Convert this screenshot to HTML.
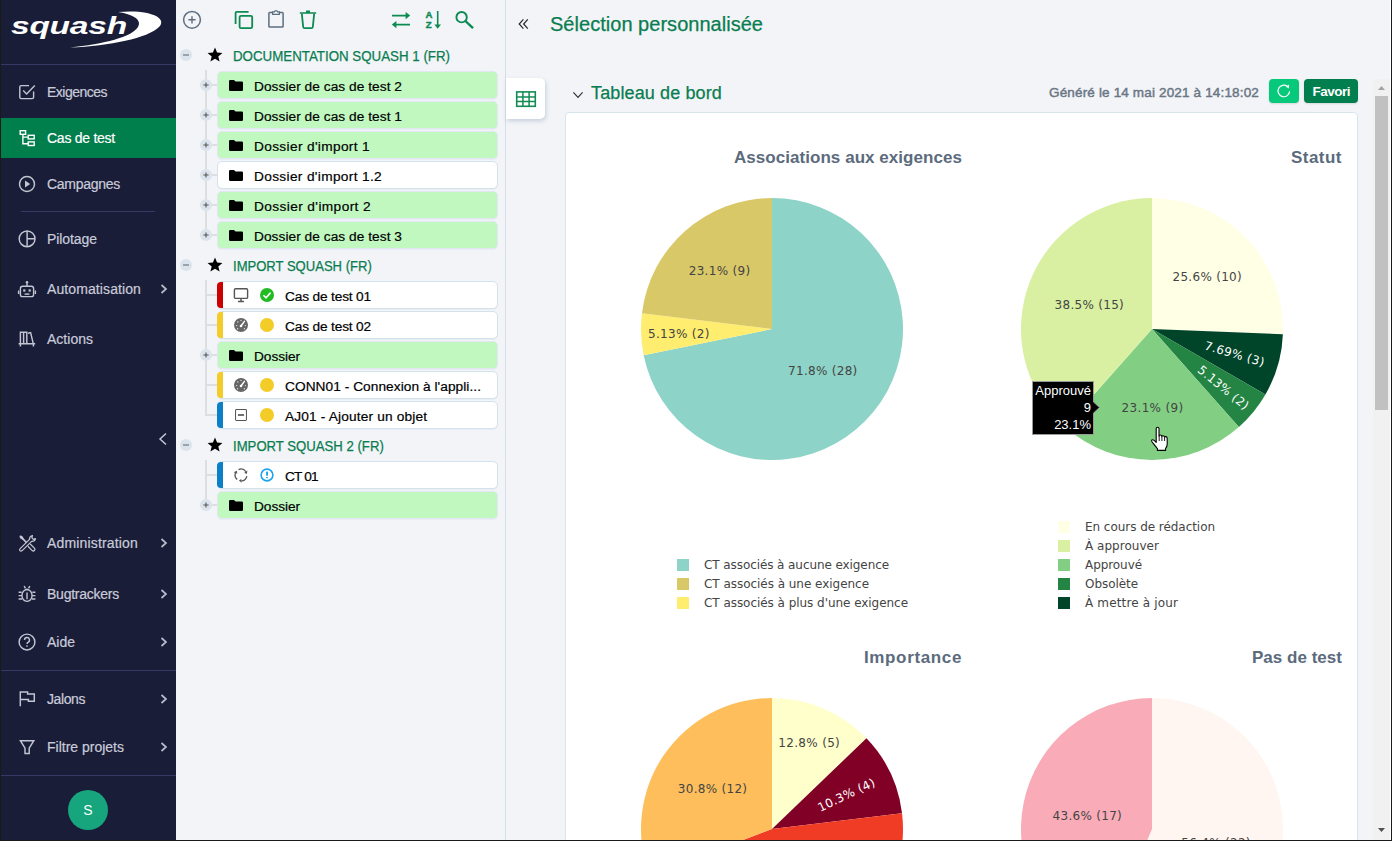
<!DOCTYPE html>
<html lang="fr"><head><meta charset="utf-8"><title>Squash TM - Cas de test</title>
<style>

*{box-sizing:border-box;margin:0;padding:0}
html,body{width:1392px;height:841px;overflow:hidden;background:#f2f4f8;font-family:"Liberation Sans",sans-serif;}
#app{position:relative;width:1392px;height:841px;overflow:hidden;background:#f2f4f8;}
.abs{position:absolute}
svg{position:absolute;overflow:visible}
/* outer frame */
#frameL{position:absolute;left:0;top:0;width:1px;height:841px;background:#1a1a18;z-index:50}
#frameB{position:absolute;left:0;top:840px;width:1392px;height:1px;background:#1a1a18;z-index:50}
#frameR{position:absolute;left:1391px;top:0;width:1px;height:841px;background:#1a1a18;z-index:50}
#frameR2{position:absolute;left:1390px;top:0;width:1px;height:840px;background:#ffffff;z-index:49}
/* sidebar */
#side{position:absolute;left:0;top:0;width:176px;height:841px;background:#1a1d38;color:#c9cbd9}
#side .sep{position:absolute;height:1px;background:#363963}
#side .it{position:absolute;left:47px;font-size:14px;line-height:20px;white-space:nowrap;color:#c9cbd9;-webkit-text-stroke:0.2px currentColor}
#side .act{position:absolute;left:1px;top:118px;width:175px;height:40px;background:#007e4b}
#side .chev{position:absolute;left:160px;width:8px;height:10px}
/* tree */
#tree{position:absolute;left:176px;top:0;width:329px;height:840px;background:#f2f4f8}
#treeDiv{position:absolute;left:505px;top:0;width:1px;height:840px;background:#d3dee8}
.row{position:absolute;left:217px;width:281px;height:28px;border-radius:5px;border:1px solid #e2e7f3;font-size:13.7px;line-height:26px;white-space:nowrap;color:#000;box-shadow:0 1px 0 rgba(215,220,236,.35)}
.row.g{background:#c0f8c0}
.row.w{background:#fff;border-color:#d4e2ec}
.row .tx{position:absolute;top:1.5px;-webkit-text-stroke:0.2px #000}
.row .stripe{position:absolute;left:-1px;top:0px;width:6px;height:26px;border-radius:4px 0 0 4px}
.proj{position:absolute;left:233px;font-size:14px;line-height:20px;color:#0a7d50;white-space:nowrap;-webkit-text-stroke:0.25px #0a7d50}
.tog{position:absolute;width:12px;height:12px;border-radius:6px;background:#dbe4ec}
.vl{position:absolute;width:1.5px;background:#dedede}
.hl{position:absolute;height:1.5px;background:#dedede}
/* main */
#main{position:absolute;left:506px;top:0;width:884px;height:840px;background:#f2f4f8}
.green{color:#0a7d50}
#card{position:absolute;left:565px;top:112px;width:793px;height:740px;background:#fff;border:1px solid #d9e5ed;border-radius:4px}
.ptitle{position:absolute;font-weight:bold;font-size:17px;line-height:20px;color:#5b6b7d;white-space:nowrap;text-align:right}
.plab{font-family:"DejaVu Sans","Liberation Sans",sans-serif;font-size:12px;fill:#444}
.leg{font-family:"DejaVu Sans","Liberation Sans",sans-serif;font-size:12px;fill:#444}

</style></head>
<body>
<div id="app">

<div id="side">
  <!-- logo -->
  <div class="abs" style="left:10.6px;top:8px;width:95px;height:36px;font-size:24.5px;line-height:36px;font-weight:bold;font-style:italic;color:#fff;transform-origin:0 0;transform:scaleX(1.37);letter-spacing:-0.2px">squash</div>
  <svg style="left:0;top:0.1px" width="176" height="64" viewBox="0 0 176 64"><path d="M118,12 C150,9 168,18 159,27 C148,38 110,46 70,47.5 C104,44 132,37 138,27 C142,20 134,14.5 118,12 Z" fill="#fff"/></svg>
  <div class="sep" style="left:1px;top:64px;width:175px"></div>
  <div class="act"></div>
  <!-- Exigences icon -->
  <svg style="left:17px;top:82px" width="20" height="20" viewBox="0 0 20 20"><path d="M12,3.6 H4.2 Q2.8,3.6 2.8,5 V15.2 Q2.8,16.6 4.2,16.6 H15.2 Q16.6,16.6 16.6,15.2 V9.5" fill="none" stroke="#c3c5d3" stroke-width="1.4"/><path d="M6.2,8.6 L9.6,12 L17.8,3.6" fill="none" stroke="#c3c5d3" stroke-width="1.4"/></svg>
  <!-- Cas de test icon -->
  <svg style="left:17px;top:128px" width="20" height="20" viewBox="0 0 20 20"><g fill="none" stroke="#fff" stroke-width="1.4"><rect x="3.2" y="2.7" width="5.4" height="3.6"/><rect x="11.2" y="7.3" width="6" height="3.6"/><rect x="11.2" y="13.9" width="6" height="3.6"/><path d="M5.9,6.3 V15.7 H11.2 M5.9,9.1 H11.2"/></g></svg>
  <!-- Campagnes icon -->
  <svg style="left:17px;top:174px" width="20" height="20" viewBox="0 0 20 20"><circle cx="10" cy="10" r="7.5" fill="none" stroke="#c3c5d3" stroke-width="1.45"/><path d="M8,6.6 L13.2,10 L8,13.4 Z" fill="#c3c5d3"/></svg>
  <div class="sep" style="left:21px;top:211px;width:134px"></div>
  <!-- Pilotage icon -->
  <svg style="left:17px;top:229px" width="20" height="20" viewBox="0 0 20 20"><circle cx="10.1" cy="9.8" r="7.9" fill="none" stroke="#c3c5d3" stroke-width="1.45"/><path d="M10.1,1.9 V17.7 M10.1,9.8 H18" fill="none" stroke="#c3c5d3" stroke-width="1.45"/></svg>
  <!-- Automatisation icon -->
  <svg style="left:17px;top:279px" width="20" height="20" viewBox="0 0 20 20"><g fill="none" stroke="#c3c5d3" stroke-width="1.4"><rect x="3.4" y="7.2" width="13.2" height="10.4" rx="2.2"/><path d="M10,7 V4.4"/><path d="M1.6,11.5 V15 M18.4,11.5 V15"/></g><circle cx="10" cy="3.4" r="1.3" fill="#c3c5d3"/><rect x="6.2" y="10.4" width="2.2" height="2.2" fill="#c3c5d3"/><rect x="11.6" y="10.4" width="2.2" height="2.2" fill="#c3c5d3"/><rect x="7.6" y="14.4" width="4.8" height="1.4" fill="#c3c5d3"/></svg>
  <!-- Actions icon -->
  <svg style="left:17px;top:329px" width="20" height="20" viewBox="0 0 20 20"><g fill="none" stroke="#c3c5d3" stroke-width="1.45"><path d="M3.4,14.6 V3.2 H6.6 V14.6 M6.6,3.2 H9.8 V14.6 M11,4.2 L13.6,3.6 L16.2,14.4"/><path d="M1.6,14.7 H18.2 M3.4,14.7 V17.6 M16.4,14.7 V17.6"/></g></svg>
  <!-- collapse -->
  <svg style="left:158px;top:432px" width="10" height="14" viewBox="0 0 10 14"><path d="M8,1.5 L2,7 L8,12.5" fill="none" stroke="#c9cbd9" stroke-width="1.45"/></svg>
  <!-- Administration icon -->
  <svg style="left:17px;top:533px" width="20" height="20" viewBox="0 0 20 20"><g fill="none" stroke="#c3c5d3" stroke-width="1.25" stroke-linejoin="round"><path d="M3.2,15.6 L12.5,6.4 Q12.2,3.6 15.4,2.5 L14.9,4.9 L16.4,6.4 L18.5,5.6 Q17.8,8.6 14.6,8.4 L5.2,17.6 Q3.9,18.6 2.9,17.6 Q2.2,16.6 3.2,15.6 Z"/><path d="M13.2,11 L17.6,15.4 Q18.4,16.6 17.4,17.6 Q16.4,18.4 15.2,17.6 L10.9,13.3"/></g><path d="M5.4,5.4 L9.6,9.6" stroke="#c3c5d3" stroke-width="1.6" fill="none"/><path d="M2.6,3.6 Q2.2,2.4 3.4,2.4 L5.2,3 L6.8,5.6 L5.6,6.8 L3,5.2 Z" fill="#c3c5d3"/></svg>
  <!-- Bugtrackers icon -->
  <svg style="left:17px;top:584px" width="20" height="20" viewBox="0 0 20 20"><g fill="none" stroke="#c3c5d3" stroke-width="1.4"><path d="M5,11 A5,5.4 0 0 1 15,11 V12 A5,5.4 0 0 1 5,12 Z"/><path d="M10,8.6 V15.2"/><path d="M1.6,8.2 H4.6 M1.6,11.6 H4.8 M1.6,15 H5 M15.4,8.2 H18.4 M15.2,11.6 H18.4 M15,15 H18.4"/><path d="M7.2,2 L8.4,4.4 M12.8,2 L11.6,4.4"/></g><path d="M7.4,6.3 A2.8,2.8 0 0 1 12.6,6.3 Z" fill="#c3c5d3"/></svg>
  <!-- Aide icon -->
  <svg style="left:17px;top:632px" width="20" height="20" viewBox="0 0 20 20"><circle cx="10" cy="10" r="7.9" fill="none" stroke="#c3c5d3" stroke-width="1.45"/><path d="M7.5,8 A2.5,2.5 0 1 1 10.9,10.3 Q10,10.8 10,12" fill="none" stroke="#c3c5d3" stroke-width="1.4"/><rect x="9.3" y="13.3" width="1.4" height="1.5" fill="#c3c5d3"/></svg>
  <div class="sep" style="left:1px;top:670px;width:175px"></div>
  <!-- Jalons icon -->
  <svg style="left:17px;top:689px" width="20" height="20" viewBox="0 0 20 20"><path d="M3.3,17.2 V3 H10.6 V4.9 H17.3 V12.3 H11.4 V10.4 H3.3" fill="none" stroke="#c3c5d3" stroke-width="1.45"/></svg>
  <!-- Filtre icon -->
  <svg style="left:17px;top:737px" width="20" height="20" viewBox="0 0 20 20"><path d="M3.4,3.7 H16.8 L12.2,11.2 V16.4 H8 V11.2 Z" fill="none" stroke="#c3c5d3" stroke-width="1.45" stroke-linejoin="miter"/></svg>
  <div class="sep" style="left:1px;top:775px;width:175px"></div>
  <div class="abs" style="left:68px;top:790px;width:40px;height:40px;border-radius:20px;background:#16a57c;color:#fff;font-size:14px;line-height:40px;text-align:center">S</div>
<div class="it" style="top:81.8px;color:#c9cbd9;letter-spacing:-0.510px">Exigences</div><div class="it" style="top:127.8px;color:#fff;letter-spacing:-0.256px">Cas de test</div><div class="it" style="top:173.8px;color:#c9cbd9;letter-spacing:-0.277px">Campagnes</div><div class="it" style="top:228.8px;color:#c9cbd9;letter-spacing:-0.074px">Pilotage</div><div class="it" style="top:278.8px;color:#c9cbd9;letter-spacing:0.100px">Automatisation</div><div class="it" style="top:328.8px;color:#c9cbd9;letter-spacing:0.013px">Actions</div><div class="it" style="top:532.8px;color:#c9cbd9;letter-spacing:0.164px">Administration</div><div class="it" style="top:583.8px;color:#c9cbd9;letter-spacing:-0.245px">Bugtrackers</div><div class="it" style="top:631.8px;color:#c9cbd9;letter-spacing:-0.005px">Aide</div><div class="it" style="top:688.8px;color:#c9cbd9;letter-spacing:-0.411px">Jalons</div><div class="it" style="top:736.8px;color:#c9cbd9;letter-spacing:-0.001px">Filtre projets</div><svg style="left:160px;top:284px" width="8" height="10" viewBox="0 0 8 10"><path d="M1.5,1 L6,5 L1.5,9" fill="none" stroke="#b9bbcb" stroke-width="1.7"/></svg><svg style="left:160px;top:538px" width="8" height="10" viewBox="0 0 8 10"><path d="M1.5,1 L6,5 L1.5,9" fill="none" stroke="#b9bbcb" stroke-width="1.7"/></svg><svg style="left:160px;top:589px" width="8" height="10" viewBox="0 0 8 10"><path d="M1.5,1 L6,5 L1.5,9" fill="none" stroke="#b9bbcb" stroke-width="1.7"/></svg><svg style="left:160px;top:637px" width="8" height="10" viewBox="0 0 8 10"><path d="M1.5,1 L6,5 L1.5,9" fill="none" stroke="#b9bbcb" stroke-width="1.7"/></svg><svg style="left:160px;top:694px" width="8" height="10" viewBox="0 0 8 10"><path d="M1.5,1 L6,5 L1.5,9" fill="none" stroke="#b9bbcb" stroke-width="1.7"/></svg><svg style="left:160px;top:742px" width="8" height="10" viewBox="0 0 8 10"><path d="M1.5,1 L6,5 L1.5,9" fill="none" stroke="#b9bbcb" stroke-width="1.7"/></svg>
</div>

<div id="tree"></div><div id="treeDiv"></div>

<svg style="left:182px;top:10px" width="20" height="20" viewBox="0 0 20 20"><circle cx="10" cy="9.8" r="8.4" fill="none" stroke="#5d6e7f" stroke-width="1.5"/><path d="M6.4,9.8 H13.6 M10,6.2 V13.4" stroke="#5d6e7f" stroke-width="1.4" fill="none"/></svg>
<svg style="left:233px;top:9px" width="22" height="22" viewBox="0 0 22 22"><path d="M2.6,15 V4 Q2.6,2.8 3.8,2.8 H15.6" fill="none" stroke="#0b8a52" stroke-width="1.8"/><rect x="6.6" y="6.8" width="12.6" height="12.4" rx="1.4" fill="none" stroke="#0b8a52" stroke-width="1.8"/></svg>
<svg style="left:266px;top:8px" width="20" height="22" viewBox="0 0 20 22"><path d="M7,4.4 H3.8 Q2.9,4.4 2.9,5.3 V18.2 Q2.9,19.1 3.8,19.1 H16.2 Q17.1,19.1 17.1,18.2 V5.3 Q17.1,4.4 16.2,4.4 H13" fill="none" stroke="#5d6e7f" stroke-width="1.5"/><path d="M6.6,6.4 V3.8 H8.4 A1.7,1.7 0 0 1 11.6,3.8 H13.4 V6.4 Z" fill="none" stroke="#5d6e7f" stroke-width="1.3"/></svg>
<svg style="left:298px;top:9px" width="20" height="22" viewBox="0 0 20 22"><path d="M1.8,4 H18.2 M8,2.4 H12" fill="none" stroke="#0b8a52" stroke-width="1.7"/><path d="M3.8,4.6 L5.2,18 Q5.3,19.2 6.5,19.2 H13.5 Q14.7,19.2 14.8,18 L16.2,4.6" fill="none" stroke="#0b8a52" stroke-width="1.8"/></svg>
<svg style="left:390px;top:9px" width="22" height="22" viewBox="0 0 22 22"><path d="M2,6.6 H17 M20,15.6 H5" fill="none" stroke="#0b8a52" stroke-width="1.6"/><path d="M15.6,3 L20.2,6.6 L15.6,10.2 Z M6.4,12 L1.8,15.6 L6.4,19.2 Z" fill="#0b8a52"/></svg>
<svg style="left:424px;top:9px" width="20" height="22" viewBox="0 0 20 22"><path d="M13.7,2 V17" fill="none" stroke="#0b8a52" stroke-width="1.6"/><path d="M10.4,15.6 L13.7,19.8 L17,15.6 Z" fill="#0b8a52"/><text x="1.4" y="9" font-family="Liberation Sans, sans-serif" font-weight="bold" font-size="9.6" fill="#0b8a52" stroke="#0b8a52" stroke-width=".4">A</text><text x="1.7" y="19.2" font-family="Liberation Sans, sans-serif" font-weight="bold" font-size="9.6" fill="#0b8a52" stroke="#0b8a52" stroke-width=".4">Z</text></svg>
<svg style="left:454px;top:9px" width="22" height="22" viewBox="0 0 22 22"><circle cx="7.6" cy="8.2" r="5.2" fill="none" stroke="#0b8a52" stroke-width="1.9"/><path d="M11.4,12 L19,19.2" stroke="#0b8a52" stroke-width="2.4" fill="none"/></svg>
<div class="vl" style="left:205.2px;top:70px;height:160px"></div><div class="vl" style="left:205.2px;top:280px;height:136px"></div><div class="vl" style="left:205.2px;top:460px;height:40px"></div><div class="tog" style="left:180px;top:49px"></div><div class="abs" style="left:183px;top:54px;width:6px;height:2px;background:#9aa3ab"></div><svg style="left:207px;top:47px" width="16" height="16" viewBox="0 0 16 16"><path d="M8,0.6 L10.05,5.55 L15.4,5.95 L11.3,9.4 L12.6,14.6 L8,11.8 L3.4,14.6 L4.7,9.4 L0.6,5.95 L5.95,5.55 Z" fill="#000"/></svg><div class="proj" style="top:46px;transform-origin:0 50%;transform:scaleX(0.9511)">DOCUMENTATION SQUASH 1 (FR)</div><div class="hl" style="left:212px;top:84.2px;width:5px"></div><svg style="left:200px;top:79px" width="12" height="12" viewBox="0 0 12 12"><circle cx="6" cy="6" r="6" fill="#dbe4ec"/><path d="M3.4,6 H8.6 M6,3.4 V8.6" stroke="#555" stroke-width="1.1" fill="none"/></svg><div class="row g" style="top:71px"><svg style="left:11px;top:7.6px" width="14" height="11" viewBox="0 0 14 11"><path d="M1.2,0 H5 L6.6,1.6 H12.8 Q14,1.6 14,2.8 V9.8 Q14,11 12.8,11 H1.2 Q0,11 0,9.8 V1.2 Q0,0 1.2,0 Z" fill="#000"/></svg><div class="tx" style="left:36px;letter-spacing:0.049px">Dossier de cas de test 2</div></div><div class="hl" style="left:212px;top:114.2px;width:5px"></div><svg style="left:200px;top:109px" width="12" height="12" viewBox="0 0 12 12"><circle cx="6" cy="6" r="6" fill="#dbe4ec"/><path d="M3.4,6 H8.6 M6,3.4 V8.6" stroke="#555" stroke-width="1.1" fill="none"/></svg><div class="row g" style="top:101px"><svg style="left:11px;top:7.6px" width="14" height="11" viewBox="0 0 14 11"><path d="M1.2,0 H5 L6.6,1.6 H12.8 Q14,1.6 14,2.8 V9.8 Q14,11 12.8,11 H1.2 Q0,11 0,9.8 V1.2 Q0,0 1.2,0 Z" fill="#000"/></svg><div class="tx" style="left:36px;letter-spacing:0.049px">Dossier de cas de test 1</div></div><div class="hl" style="left:212px;top:144.2px;width:5px"></div><svg style="left:200px;top:139px" width="12" height="12" viewBox="0 0 12 12"><circle cx="6" cy="6" r="6" fill="#dbe4ec"/><path d="M3.4,6 H8.6 M6,3.4 V8.6" stroke="#555" stroke-width="1.1" fill="none"/></svg><div class="row g" style="top:131px"><svg style="left:11px;top:7.6px" width="14" height="11" viewBox="0 0 14 11"><path d="M1.2,0 H5 L6.6,1.6 H12.8 Q14,1.6 14,2.8 V9.8 Q14,11 12.8,11 H1.2 Q0,11 0,9.8 V1.2 Q0,0 1.2,0 Z" fill="#000"/></svg><div class="tx" style="left:36px;letter-spacing:0.341px">Dossier d'import 1</div></div><div class="hl" style="left:212px;top:174.2px;width:5px"></div><svg style="left:200px;top:169px" width="12" height="12" viewBox="0 0 12 12"><circle cx="6" cy="6" r="6" fill="#dbe4ec"/><path d="M3.4,6 H8.6 M6,3.4 V8.6" stroke="#555" stroke-width="1.1" fill="none"/></svg><div class="row w" style="top:161px"><svg style="left:11px;top:7.6px" width="14" height="11" viewBox="0 0 14 11"><path d="M1.2,0 H5 L6.6,1.6 H12.8 Q14,1.6 14,2.8 V9.8 Q14,11 12.8,11 H1.2 Q0,11 0,9.8 V1.2 Q0,0 1.2,0 Z" fill="#000"/></svg><div class="tx" style="left:36px;letter-spacing:0.336px">Dossier d'import 1.2</div></div><div class="hl" style="left:212px;top:204.2px;width:5px"></div><svg style="left:200px;top:199px" width="12" height="12" viewBox="0 0 12 12"><circle cx="6" cy="6" r="6" fill="#dbe4ec"/><path d="M3.4,6 H8.6 M6,3.4 V8.6" stroke="#555" stroke-width="1.1" fill="none"/></svg><div class="row g" style="top:191px"><svg style="left:11px;top:7.6px" width="14" height="11" viewBox="0 0 14 11"><path d="M1.2,0 H5 L6.6,1.6 H12.8 Q14,1.6 14,2.8 V9.8 Q14,11 12.8,11 H1.2 Q0,11 0,9.8 V1.2 Q0,0 1.2,0 Z" fill="#000"/></svg><div class="tx" style="left:36px;letter-spacing:0.396px">Dossier d'import 2</div></div><div class="hl" style="left:212px;top:234.2px;width:5px"></div><svg style="left:200px;top:229px" width="12" height="12" viewBox="0 0 12 12"><circle cx="6" cy="6" r="6" fill="#dbe4ec"/><path d="M3.4,6 H8.6 M6,3.4 V8.6" stroke="#555" stroke-width="1.1" fill="none"/></svg><div class="row g" style="top:221px"><svg style="left:11px;top:7.6px" width="14" height="11" viewBox="0 0 14 11"><path d="M1.2,0 H5 L6.6,1.6 H12.8 Q14,1.6 14,2.8 V9.8 Q14,11 12.8,11 H1.2 Q0,11 0,9.8 V1.2 Q0,0 1.2,0 Z" fill="#000"/></svg><div class="tx" style="left:36px;letter-spacing:0.049px">Dossier de cas de test 3</div></div><div class="tog" style="left:180px;top:259px"></div><div class="abs" style="left:183px;top:264px;width:6px;height:2px;background:#9aa3ab"></div><svg style="left:207px;top:257px" width="16" height="16" viewBox="0 0 16 16"><path d="M8,0.6 L10.05,5.55 L15.4,5.95 L11.3,9.4 L12.6,14.6 L8,11.8 L3.4,14.6 L4.7,9.4 L0.6,5.95 L5.95,5.55 Z" fill="#000"/></svg><div class="proj" style="top:256px;transform-origin:0 50%;transform:scaleX(0.9324)">IMPORT SQUASH (FR)</div><div class="hl" style="left:206px;top:294.2px;width:11px"></div><div class="row w" style="top:281px"><div class="stripe" style="background:#cc0000"></div><svg style="left:15px;top:5px" width="16" height="16" viewBox="0 0 16 16"><rect x="1.4" y="1.8" width="13.2" height="9.6" rx="1.2" fill="none" stroke="#555" stroke-width="1.4"/><path d="M8,11.6 V14 M5,14.4 H11" stroke="#555" stroke-width="1.5" fill="none"/></svg><svg style="left:42px;top:6px" width="14" height="14" viewBox="0 0 14 14"><circle cx="7" cy="7" r="7" fill="#22bb22"/><path d="M3.4,7.2 L6,9.8 L10.6,4.6" fill="none" stroke="#fff" stroke-width="1.6"/></svg><div class="tx" style="left:67px;letter-spacing:-0.161px">Cas de test 01</div></div><div class="hl" style="left:206px;top:324.2px;width:11px"></div><div class="row w" style="top:311px"><div class="stripe" style="background:#f4cc27"></div><svg style="left:16px;top:6.2px" width="14" height="14" viewBox="0 0 14 14"><circle cx="7" cy="7" r="7" fill="#666"/><path d="M7,8 L10.4,3.4" stroke="#fff" stroke-width="1.5" stroke-linecap="round"/><circle cx="7" cy="8" r="1.3" fill="#fff"/><g fill="#ddd"><circle cx="2.6" cy="7.6" r=".7"/><circle cx="3.8" cy="4" r=".7"/><circle cx="7" cy="2.4" r=".7"/><circle cx="11.4" cy="7.6" r=".7"/><circle cx="3.6" cy="10.8" r=".7"/><circle cx="10.4" cy="10.8" r=".7"/></g></svg><svg style="left:42px;top:6px" width="14" height="14" viewBox="0 0 14 14"><circle cx="7" cy="7" r="7" fill="#f4cc27"/></svg><div class="tx" style="left:67px;letter-spacing:-0.161px">Cas de test 02</div></div><div class="hl" style="left:212px;top:354.2px;width:5px"></div><svg style="left:200px;top:349px" width="12" height="12" viewBox="0 0 12 12"><circle cx="6" cy="6" r="6" fill="#dbe4ec"/><path d="M3.4,6 H8.6 M6,3.4 V8.6" stroke="#555" stroke-width="1.1" fill="none"/></svg><div class="row g" style="top:341px"><svg style="left:11px;top:7.6px" width="14" height="11" viewBox="0 0 14 11"><path d="M1.2,0 H5 L6.6,1.6 H12.8 Q14,1.6 14,2.8 V9.8 Q14,11 12.8,11 H1.2 Q0,11 0,9.8 V1.2 Q0,0 1.2,0 Z" fill="#000"/></svg><div class="tx" style="left:36px;letter-spacing:-0.057px">Dossier</div></div><div class="hl" style="left:206px;top:384.2px;width:11px"></div><div class="row w" style="top:371px"><div class="stripe" style="background:#f4cc27"></div><svg style="left:16px;top:6.2px" width="14" height="14" viewBox="0 0 14 14"><circle cx="7" cy="7" r="7" fill="#666"/><path d="M7,8 L10.4,3.4" stroke="#fff" stroke-width="1.5" stroke-linecap="round"/><circle cx="7" cy="8" r="1.3" fill="#fff"/><g fill="#ddd"><circle cx="2.6" cy="7.6" r=".7"/><circle cx="3.8" cy="4" r=".7"/><circle cx="7" cy="2.4" r=".7"/><circle cx="11.4" cy="7.6" r=".7"/><circle cx="3.6" cy="10.8" r=".7"/><circle cx="10.4" cy="10.8" r=".7"/></g></svg><svg style="left:42px;top:6px" width="14" height="14" viewBox="0 0 14 14"><circle cx="7" cy="7" r="7" fill="#f4cc27"/></svg><div class="tx" style="left:67px;letter-spacing:0.054px">CONN01 - Connexion à l'appli...</div></div><div class="hl" style="left:206px;top:414.2px;width:11px"></div><div class="row w" style="top:401px"><div class="stripe" style="background:#0b7fc7"></div><svg style="left:17px;top:7px" width="12" height="12" viewBox="0 0 13 13"><rect x=".6" y=".6" width="11.8" height="11.8" rx="1" fill="none" stroke="#555" stroke-width="1.1"/><rect x="3.2" y="5.6" width="6.6" height="1.8" fill="#555"/></svg><svg style="left:42px;top:6px" width="14" height="14" viewBox="0 0 14 14"><circle cx="7" cy="7" r="7" fill="#f4cc27"/></svg><div class="tx" style="left:67px;letter-spacing:0.163px">AJ01 - Ajouter un objet</div></div><div class="tog" style="left:180px;top:439px"></div><div class="abs" style="left:183px;top:444px;width:6px;height:2px;background:#9aa3ab"></div><svg style="left:207px;top:437px" width="16" height="16" viewBox="0 0 16 16"><path d="M8,0.6 L10.05,5.55 L15.4,5.95 L11.3,9.4 L12.6,14.6 L8,11.8 L3.4,14.6 L4.7,9.4 L0.6,5.95 L5.95,5.55 Z" fill="#000"/></svg><div class="proj" style="top:436px;transform-origin:0 50%;transform:scaleX(0.9393)">IMPORT SQUASH 2 (FR)</div><div class="hl" style="left:206px;top:474.2px;width:11px"></div><div class="row w" style="top:461px"><div class="stripe" style="background:#0b7fc7"></div><svg style="left:16px;top:6px" width="14" height="14" viewBox="0 0 14 14"><g fill="none" stroke="#555" stroke-width="1.3"><path d="M4.51,1.65 A5.9,5.9 0 0 1 11.83,3.62 M12.81,8.02 A5.9,5.9 0 0 1 7.51,12.88 M3.21,11.52 A5.9,5.9 0 0 1 1.46,4.98"/></g><path d="M10.28,4.71 L13.39,2.53 L12.83,6.08 Z M7.35,10.98 L7.68,14.77 L4.89,12.51 Z M3.24,5.63 L-0.33,4.33 L2.90,2.76 Z" fill="#555"/></svg><svg style="left:42px;top:6px" width="14" height="14" viewBox="0 0 14 14"><circle cx="7" cy="7" r="5.9" fill="#fff" stroke="#1ca3ee" stroke-width="1.6"/><rect x="6.1" y="3.6" width="1.9" height="4.2" rx=".4" fill="#1ca3ee"/><rect x="6.1" y="8.9" width="1.9" height="1.3" rx=".4" fill="#1ca3ee"/></svg><div class="tx" style="left:67px;letter-spacing:-0.855px">CT 01</div></div><div class="hl" style="left:212px;top:504.2px;width:5px"></div><svg style="left:200px;top:499px" width="12" height="12" viewBox="0 0 12 12"><circle cx="6" cy="6" r="6" fill="#dbe4ec"/><path d="M3.4,6 H8.6 M6,3.4 V8.6" stroke="#555" stroke-width="1.1" fill="none"/></svg><div class="row g" style="top:491px"><svg style="left:11px;top:7.6px" width="14" height="11" viewBox="0 0 14 11"><path d="M1.2,0 H5 L6.6,1.6 H12.8 Q14,1.6 14,2.8 V9.8 Q14,11 12.8,11 H1.2 Q0,11 0,9.8 V1.2 Q0,0 1.2,0 Z" fill="#000"/></svg><div class="tx" style="left:36px;letter-spacing:-0.057px">Dossier</div></div>
<div id="main"></div>
<svg style="left:517px;top:18px" width="12" height="12" viewBox="0 0 12 12"><path d="M6.4,1.4 L2.2,6 L6.4,10.6 M10.8,1.4 L6.6,6 L10.8,10.6" fill="none" stroke="#222" stroke-width="1.15"/></svg><div class="abs green" style="left:550px;top:10px;font-size:20px;line-height:28px;white-space:nowrap;-webkit-text-stroke:0.25px #0a7d50;letter-spacing:0.028px">Sélection personnalisée</div><div class="abs" style="left:506px;top:78px;width:39px;height:41px;background:#fff;border-radius:0 5px 5px 0;box-shadow:1px 2px 4px rgba(120,140,170,.35)"></div><svg style="left:515px;top:90px" width="22" height="18" viewBox="0 0 22 18"><g fill="none" stroke="#158a55"><rect x="1.7" y="1.9" width="18.6" height="14.4" stroke-width="1.6"/><path d="M1.7,6.9 H20.3 M1.7,11.5 H20.3" stroke-width="1.5"/><path d="M7.9,1.9 V16.3 M14.1,1.9 V16.3" stroke-width="1.5"/></g></svg><svg style="left:572px;top:91px" width="12" height="8" viewBox="0 0 12 8"><path d="M1.4,1.4 L6,6.4 L10.6,1.4" fill="none" stroke="#333" stroke-width="1.2"/></svg><div class="abs green" style="left:591px;top:81px;font-size:18px;line-height:24px;white-space:nowrap;-webkit-text-stroke:0.25px #0a7d50;letter-spacing:0.126px">Tableau de bord</div><div class="abs" style="left:1049px;top:82.7px;font-size:13.5px;line-height:20px;white-space:nowrap;color:#6b7684;-webkit-text-stroke:0.45px #6b7684;letter-spacing:0.159px">Généré le 14 mai 2021 à 14:18:02</div><div class="abs" style="left:1269px;top:79px;width:30px;height:24px;background:#07c97b;border-radius:4px;box-shadow:0 1px 2px rgba(0,0,0,.12)"></div><svg style="left:1276px;top:83px" width="16" height="16" viewBox="0 0 16 16"><path d="M13.6,8.2 A5.8,5.8 0 1 1 11.4,3.4" fill="none" stroke="#fff" stroke-width="1.2"/><path d="M9.6,3.6 L13,1.8 L12.8,5.6 Z" fill="#fff"/></svg><div class="abs" style="left:1304px;top:79px;width:54px;height:24px;background:#017f4e;border-radius:4px;box-shadow:0 1px 2px rgba(0,0,0,.12);color:#fff;font-weight:bold;font-size:13.5px;line-height:26.5px;padding-left:8.5px;letter-spacing:-0.502px">Favori</div><div id="card"></div>
<svg style="left:0;top:0" width="1392" height="841" viewBox="0 0 1392 841">
<path d="M772.00,329.00 L772.00,198.00 A131,131 0 1 1 643.65,355.20 Z" fill="#8dd3c7"/>
<path d="M772.00,329.00 L643.65,355.20 A131,131 0 0 1 641.96,313.21 Z" fill="#ffed6f"/>
<path d="M772.00,329.00 L641.96,313.21 A131,131 0 0 1 772.00,198.00 Z" fill="#d9c867"/><path d="M1152.00,329.00 L1152.00,198.00 A131,131 0 0 1 1282.89,334.27 Z" fill="#ffffe5"/>
<path d="M1152.00,329.00 L1282.89,334.27 A131,131 0 0 1 1265.45,394.50 Z" fill="#004529"/>
<path d="M1152.00,329.00 L1265.45,394.50 A131,131 0 0 1 1238.87,427.05 Z" fill="#238443"/>
<path d="M1152.00,329.00 L1238.87,427.05 A131,131 0 0 1 1065.13,427.05 Z" fill="#82cf83"/>
<path d="M1152.00,329.00 L1065.13,427.05 A131,131 0 0 1 1152.00,198.00 Z" fill="#d9f0a3"/><path d="M772.00,829.00 L772.00,698.00 A131,131 0 0 1 866.48,738.25 Z" fill="#ffffcc"/>
<path d="M772.00,829.00 L866.48,738.25 A131,131 0 0 1 902.04,813.21 Z" fill="#800026"/>
<path d="M772.00,829.00 L902.04,813.21 A131,131 0 0 1 649.51,875.45 Z" fill="#f03c25"/>
<path d="M772.00,829.00 L649.51,875.45 A131,131 0 0 1 772.00,698.00 Z" fill="#fdbe5b"/><path d="M1152.00,829.00 L1152.00,698.00 A131,131 0 1 1 1100.65,949.52 Z" fill="#fff5f1"/>
<path d="M1152.00,829.00 L1100.65,949.52 A131,131 0 0 1 1152.00,698.00 Z" fill="#f9acb8"/><text class="plab" x="788.1" y="375.0" text-anchor="start" style="fill:#444;letter-spacing:0.293px">71.8% (28)</text><text class="plab" x="688.7" y="275.1" text-anchor="start" style="fill:#444;letter-spacing:0.318px">23.1% (9)</text><text class="plab" x="648.0" y="338.3" text-anchor="start" style="fill:#444;letter-spacing:0.318px">5.13% (2)</text><text class="plab" x="1172.5" y="280.7" text-anchor="start" style="fill:#444;letter-spacing:0.293px">25.6% (10)</text><text class="plab" x="1054.6" y="308.9" text-anchor="start" style="fill:#444;letter-spacing:0.293px">38.5% (15)</text><text class="plab" x="1121.6" y="412.3" text-anchor="start" style="fill:#444;letter-spacing:0.318px">23.1% (9)</text><text class="plab" x="1204.0" y="358.1" text-anchor="start" style="fill:#fff;letter-spacing:0.341px" transform="rotate(16.2 1235.0 353.0)">7.69% (3)</text><text class="plab" x="1193.0" y="392.1" text-anchor="start" style="fill:#fff;letter-spacing:0.341px" transform="rotate(39.2 1224.0 387.0)">5.13% (2)</text><text class="plab" x="778.3" y="747.2" text-anchor="start" style="fill:#444;letter-spacing:0.318px">12.8% (5)</text><text class="plab" x="815.0" y="799.1" text-anchor="start" style="fill:#fff;letter-spacing:0.341px" transform="rotate(-25.4 846.0 794.0)">10.3% (4)</text><text class="plab" x="677.8" y="793.2" text-anchor="start" style="fill:#444;letter-spacing:0.293px">30.8% (12)</text><text class="plab" x="1052.6" y="820.3" text-anchor="start" style="fill:#444;letter-spacing:0.293px">43.6% (17)</text><text class="plab" x="1181.3" y="847.0" text-anchor="start" style="fill:#444;letter-spacing:0.293px">56.4% (22)</text><rect x="677" y="559" width="12" height="12" fill="#8dd3c7"/><text class="leg" x="704" y="569.2" style="letter-spacing:-0.084px">CT associés à aucune exigence</text><rect x="677" y="578" width="12" height="12" fill="#d9c867"/><text class="leg" x="704" y="588.2" style="letter-spacing:-0.034px">CT associés à une exigence</text><rect x="677" y="597" width="12" height="12" fill="#ffed6f"/><text class="leg" x="704" y="607.2" style="letter-spacing:-0.043px">CT associés à plus d'une exigence</text><rect x="1058" y="521" width="12" height="12" fill="#ffffe5"/><text class="leg" x="1085" y="531.2" style="letter-spacing:-0.046px">En cours de rédaction</text><rect x="1058" y="540" width="12" height="12" fill="#d9f0a3"/><text class="leg" x="1085" y="550.2" style="letter-spacing:0.032px">À approuver</text><rect x="1058" y="559" width="12" height="12" fill="#82cf83"/><text class="leg" x="1085" y="569.2" style="letter-spacing:-0.068px">Approuvé</text><rect x="1058" y="578" width="12" height="12" fill="#238443"/><text class="leg" x="1085" y="588.2" style="letter-spacing:-0.058px">Obsolète</text><rect x="1058" y="597" width="12" height="12" fill="#004529"/><text class="leg" x="1085" y="607.2" style="letter-spacing:0.150px">À mettre à jour</text><path d="M1032.5,381.500 H1093.5 V402 L1099.5,407.5 L1093.5,413 V434.500 H1032.5 Z" fill="#000" stroke="#9a9a9a" stroke-width="1"/><text x="1091" y="395.0" text-anchor="end" font-family="Liberation Sans, sans-serif" font-size="13" fill="#fff">Approuvé</text><text x="1091" y="411.9" text-anchor="end" font-family="Liberation Sans, sans-serif" font-size="13" fill="#fff">9</text><text x="1091" y="428.8" text-anchor="end" font-family="Liberation Sans, sans-serif" font-size="13" fill="#fff">23.1%</text><g transform="translate(1150,427)"><path d="M6.2,1.6 Q6.2,0.3 7.6,0.3 Q9,0.3 9,1.6 V9.2 Q9.2,8 10.4,8 Q11.8,8 11.8,9.6 Q12,8.6 13.2,8.7 Q14.5,8.8 14.5,10.3 Q14.8,9.5 15.9,9.6 Q17.2,9.8 17.2,11.4 V17 Q17.2,19.8 15.6,21.4 V23.4 H7.4 V21.6 Q5.4,19.2 3.2,16.4 Q1.2,14 1.6,13.2 Q2.6,12.2 4.2,13.4 L6.2,15.4 Z" fill="#fff" stroke="#000" stroke-width="1.1" stroke-linejoin="round"/><path d="M9.2,9.2 V14 M11.9,9.8 V14 M14.6,10.6 V14" stroke="#000" stroke-width="0.9" fill="none"/></g></svg>
<div class="ptitle" style="left:714px;top:148px;width:248px;letter-spacing:0.047px">Associations aux exigences</div><div class="ptitle" style="left:1271px;top:148px;width:71px;letter-spacing:0.473px">Statut</div><div class="ptitle" style="left:844px;top:648px;width:118px;letter-spacing:0.637px">Importance</div><div class="ptitle" style="left:1232px;top:648px;width:110px;letter-spacing:0.021px">Pas de test</div><div class="abs" style="left:1373px;top:79px;width:17px;height:761px;background:#f1f1f1"></div><div class="abs" style="left:1375px;top:96px;width:13px;height:314px;background:#c1c1c1"></div><svg style="left:1373px;top:79px" width="17" height="761" viewBox="0 0 17 761"><path d="M5,11 L8.5,7 L12,11 Z" fill="#a3a3a3"/><path d="M5,749 L8.5,753 L12,749 Z" fill="#505050"/></svg><div id="frameR2"></div><div id="frameL"></div><div id="frameB"></div><div id="frameR"></div>
</div>
</body></html>
